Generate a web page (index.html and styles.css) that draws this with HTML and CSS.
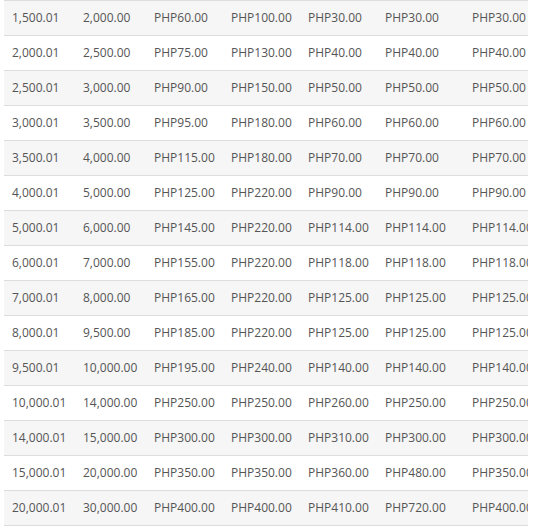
FILE: index.html
```html
<!DOCTYPE html>
<html>
<head>
<meta charset="utf-8">
<link rel="stylesheet" href="styles.css">
</head>
<body>
<div class="wrap">
<table class="rates">
<colgroup>
<col class="c1"><col class="c2"><col class="c3"><col class="c4"><col class="c5"><col class="c6"><col class="c7">
</colgroup>
<tbody>
<tr><td>1,500.01</td><td>2,000.00</td><td>PHP60.00</td><td>PHP100.00</td><td>PHP30.00</td><td>PHP30.00</td><td>PHP30.00</td></tr>
<tr><td>2,000.01</td><td>2,500.00</td><td>PHP75.00</td><td>PHP130.00</td><td>PHP40.00</td><td>PHP40.00</td><td>PHP40.00</td></tr>
<tr><td>2,500.01</td><td>3,000.00</td><td>PHP90.00</td><td>PHP150.00</td><td>PHP50.00</td><td>PHP50.00</td><td>PHP50.00</td></tr>
<tr><td>3,000.01</td><td>3,500.00</td><td>PHP95.00</td><td>PHP180.00</td><td>PHP60.00</td><td>PHP60.00</td><td>PHP60.00</td></tr>
<tr><td>3,500.01</td><td>4,000.00</td><td>PHP115.00</td><td>PHP180.00</td><td>PHP70.00</td><td>PHP70.00</td><td>PHP70.00</td></tr>
<tr><td>4,000.01</td><td>5,000.00</td><td>PHP125.00</td><td>PHP220.00</td><td>PHP90.00</td><td>PHP90.00</td><td>PHP90.00</td></tr>
<tr><td>5,000.01</td><td>6,000.00</td><td>PHP145.00</td><td>PHP220.00</td><td>PHP114.00</td><td>PHP114.00</td><td>PHP114.00</td></tr>
<tr><td>6,000.01</td><td>7,000.00</td><td>PHP155.00</td><td>PHP220.00</td><td>PHP118.00</td><td>PHP118.00</td><td>PHP118.00</td></tr>
<tr><td>7,000.01</td><td>8,000.00</td><td>PHP165.00</td><td>PHP220.00</td><td>PHP125.00</td><td>PHP125.00</td><td>PHP125.00</td></tr>
<tr><td>8,000.01</td><td>9,500.00</td><td>PHP185.00</td><td>PHP220.00</td><td>PHP125.00</td><td>PHP125.00</td><td>PHP125.00</td></tr>
<tr><td>9,500.01</td><td>10,000.00</td><td>PHP195.00</td><td>PHP240.00</td><td>PHP140.00</td><td>PHP140.00</td><td>PHP140.00</td></tr>
<tr><td>10,000.01</td><td>14,000.00</td><td>PHP250.00</td><td>PHP250.00</td><td>PHP260.00</td><td>PHP250.00</td><td>PHP250.00</td></tr>
<tr><td>14,000.01</td><td>15,000.00</td><td>PHP300.00</td><td>PHP300.00</td><td>PHP310.00</td><td>PHP300.00</td><td>PHP300.00</td></tr>
<tr><td>15,000.01</td><td>20,000.00</td><td>PHP350.00</td><td>PHP350.00</td><td>PHP360.00</td><td>PHP480.00</td><td>PHP350.00</td></tr>
<tr><td>20,000.01</td><td>30,000.00</td><td>PHP400.00</td><td>PHP400.00</td><td>PHP410.00</td><td>PHP720.00</td><td>PHP400.00</td></tr>
</tbody>
</table>
</div>
</body>
</html>
```
FILE: styles.css
```css
html, body {
  margin: 0;
  padding: 0;
  background: #fff;
}
.wrap {
  margin-left: 4px;
  width: 524px;
  overflow: hidden;
}
.rates {
  border-collapse: collapse;
  table-layout: fixed;
  width: 560px;
  font-family: "Open Sans", "Liberation Sans", sans-serif;
  font-size: 12px;
  color: #555;
}
.c1, .c2 { width: 71px; }
.c3, .c4, .c5 { width: 77px; }
.c6 { width: 87px; }
.c7 { width: 100px; }
.rates td {
  padding: 8px 8px;
  line-height: 18px;
  border-top: 1px solid #ddd;
  border-bottom: 1px solid #ddd;
  white-space: nowrap;
  overflow: hidden;
  text-align: left;
}
.rates tr:nth-child(odd) td {
  background: #f6f6f6;
}
```
